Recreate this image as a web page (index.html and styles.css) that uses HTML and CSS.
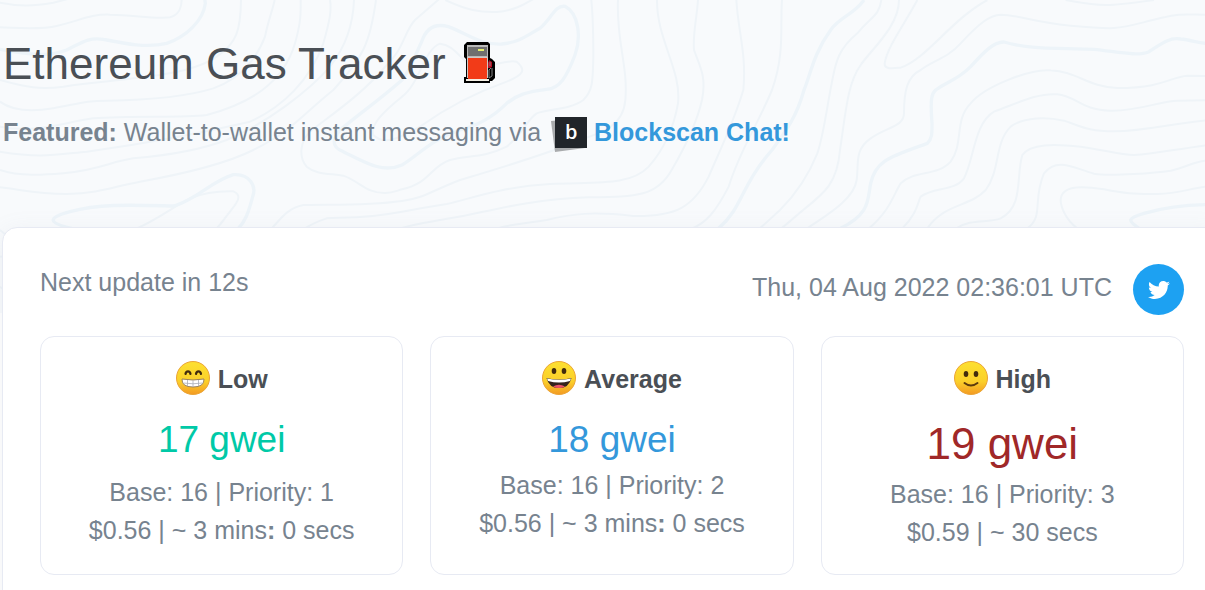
FILE: index.html
```html
<!DOCTYPE html>
<html lang="en">
<head>
  <meta charset="UTF-8">
  <meta name="viewport" content="width=device-width,initial-scale=1.0">
  <title>Ethereum Gas Tracker</title>
  <link rel="stylesheet" href="styles.css">
</head>
<body>
  <!-- contour lines behind the header -->
  <svg class="contours" viewBox="0 0 3615 940" preserveAspectRatio="xMinYMin slice" aria-hidden="true">
    <g class="thin">
      <path d="M0 8C60 20 100 18 160 8L230-10"/>
      <path d="M0 82C60 84 120 90 170 78C240 62 270 42 330 44C400 44 460 58 510 52C540 44 545 20 545-5"/>
      <path d="M0 240C80 262 120 270 190 260C280 245 330 245 400 235C520 222 600 205 650 170C710 130 722 90 723 0"/>
      <path d="M0 305C40 335 100 335 160 325C240 310 260 302 320 302C440 300 560 290 640 265C740 230 780 150 795 110C805 60 818 30 824 0"/>
      <path d="M0 380C110 400 180 370 280 355C400 345 540 355 620 345C750 310 850 250 885 130C905 60 902 30 902 0"/>
      <path d="M0 455C120 475 160 465 260 455C440 430 600 400 750 365C850 320 930 240 970 130C990 60 995 30 990 0"/>
      <path d="M0 510C60 530 130 525 190 520C300 510 330 485 400 475C520 465 600 450 680 420C800 370 930 270 990 200C1045 130 1060 60 1062 0"/>
      <path d="M0 562C70 570 110 582 200 582C300 580 340 560 420 545C560 520 680 490 760 450C880 390 900 350 1000 270C1090 170 1110 130 1128 0"/>
      <path d="M410 685C470 660 520 620 570 595C620 575 660 573 700 574C730 585 710 610 690 635C670 660 665 670 650 685"/>
      <path d="M0 690L24 710M0 770L24 768M0 860L24 880"/>
      <path d="M1320-5L1245 60C1215 90 1210 150 1160 195C1090 280 1000 340 930 395C900 425 895 470 920 500C950 525 990 520 1030 527C1080 545 1100 580 1155 579C1180 578 1190 572 1206 568C1290 550 1290 500 1350 480C1400 465 1450 475 1520 440C1570 400 1580 360 1610 340C1650 325 1710 330 1750 300C1780 270 1778 240 1780 170C1780 90 1780 60 1774 0"/>
      <path d="M1206 290C1260 250 1270 150 1320 131C1370 135 1390 200 1440 205C1490 190 1530 180 1550 185C1580 210 1570 225 1520 245C1420 280 1330 330 1260 380C1190 420 1150 435 1120 405C1110 375 1150 335 1206 290Z"/>
      <path d="M1336 0C1400 30 1440 38 1490 36C1540 32 1570 15 1600-3"/>
      <path d="M1854 0C1848 120 1885 200 1876 300C1870 380 1800 400 1740 420C1650 460 1480 510 1380 540C1290 575 1270 595 1206 603C1100 618 1000 613 910 615C860 625 840 660 815 685"/>
      <path d="M1971 0C1970 120 2045 210 2034 310C2020 390 1990 450 1946 500C1890 560 1780 545 1650 552C1500 560 1400 600 1340 612C1290 620 1260 625 1206 635C1100 655 1040 652 980 655C950 665 930 675 915 685"/>
      <path d="M2094 0C2090 60 2078 100 2082 150C2100 200 2120 230 2106 300C2090 370 2050 450 2015 510C1970 590 1910 590 1766 592C1560 600 1450 640 1350 655C1300 665 1250 670 1206 684"/>
      <path d="M2209 0C2215 100 2240 160 2230 270C2200 370 2160 450 2126 530C2080 620 2030 650 1900 648C1780 635 1720 640 1640 660C1570 672 1530 672 1490 686"/>
      <path d="M2346 0C2340 80 2355 160 2316 270C2270 380 2220 450 2186 560C2150 630 2120 670 2070 688"/>
      <path d="M2644 0C2637 50 2612 50 2572 100C2512 150 2507 190 2497 240C2477 340 2472 400 2452 460C2420 540 2380 590 2340 630L2280 685"/>
      <path d="M2697 0C2697 80 2612 150 2582 195C2542 250 2537 340 2520 450C2512 550 2472 580 2412 628L2345 685"/>
      <path d="M2752 0C2712 75 2662 140 2654 190C2652 210 2682 205 2702 203C2782 175 2852 60 2962 0"/>
    </g>
    <g class="thin" transform="translate(2412 0)">
      <path d="M10 685C60 650 150 600 158 540C165 490 150 450 200 415C250 380 300 380 300 340C300 270 310 230 350 210C390 180 430 175 470 130C530 65 560 45 590 44C640 44 680 65 800 77C960 92 940 85 1080 52C1120 40 1150 44 1205 44"/>
      <path d="M785 0C900 22 920 18 1050 0"/>
      <path d="M195 685C260 630 270 580 290 550C330 510 400 530 440 485C480 430 450 360 500 310C540 260 680 205 740 211C820 215 850 260 940 264C1080 264 1100 230 1150 227L1205 228"/>
      <path d="M295 685C340 640 340 610 350 590C390 560 450 575 480 535C510 480 510 370 570 335C640 310 700 278 760 283C820 290 830 330 920 332C1010 333 1070 302 1120 302L1205 301"/>
      <path d="M370 685C420 610 500 620 545 570C590 510 570 430 620 380C660 350 730 350 780 362C830 378 850 394 930 394C1030 392 1090 372 1205 361"/>
      <path d="M457 685C500 655 550 670 590 655C660 620 635 530 655 465C680 430 750 432 830 440C900 450 950 465 990 465C1050 462 1100 450 1205 436"/>
      <path d="M670 685C720 650 685 600 720 520C760 470 810 505 870 521C920 530 1060 518 1100 512C1150 500 1170 485 1205 482"/>
      <path d="M820 685C785 660 770 620 770 600C772 550 850 560 900 568C960 580 990 583 1060 582C1120 580 1150 568 1205 560"/>
    </g>
    <g class="thick">
      <path d="M0 148C90 165 150 170 200 150C250 125 265 112 310 118C370 130 440 145 500 130C560 110 610 60 616 10L614-5"/>
      <path d="M215 685C150 670 135 655 210 635C300 610 400 615 520 618C580 605 640 540 700 524C750 520 770 560 758 590C745 640 735 665 715 685"/>
      <path d="M1206 240C1235 205 1245 165 1265 125C1280 80 1310 70 1345 80C1400 100 1440 135 1505 132C1560 128 1590 100 1620 85C1655 55 1665 15 1695 19C1735 40 1745 110 1725 165C1700 230 1680 265 1640 268C1580 275 1550 285 1520 310C1490 340 1440 375 1380 390C1290 420 1250 470 1206 495C1150 520 1100 490 1030 455C990 440 1000 415 1020 390C1080 340 1150 290 1206 240"/>
      <path d="M2592 0C2560 45 2520 50 2492 90C2440 160 2430 230 2412 270C2390 350 2360 390 2316 450C2220 560 2230 620 2156 685"/>
      <path d="M2522 685C2612 640 2602 600 2612 550C2627 480 2672 470 2782 430C2797 415 2796 400 2796 370C2790 290 2796 280 2807 270C2842 245 2872 240 2912 200C2952 155 2982 125 3012 126C3052 138 3092 145 3172 145L3282 148C3352 155 3412 170 3447 155C3492 125 3512 112 3542 117C3572 120 3592 128 3617 130"/>
      <path d="M3417 685C3382 660 3382 655 3432 640C3502 620 3552 615 3617 614"/>
    </g>
  </svg>

  <div class="container">
    <header class="page-header">
      <h1>Ethereum Gas Tracker
        <svg class="pump" viewBox="0 0 31 41" role="img" aria-label="Fuel pump">
          <path d="M3 0H24L26 2V16L28 17L31 20V36L28 39H26V41H0V35H2V17L0 15V3Z" fill="#000"/>
          <path d="M3 3H24V16H3Z" fill="#b9b9b9"/>
          <path d="M4 5H23V14H4Z" fill="#6f6f6f"/>
          <path d="M14 7H20V9H14Z" fill="#e5f06a"/>
          <path d="M3 15H24V36H3Z" fill="#cfc8c4"/>
          <path d="M4 16H23V37H4Z" fill="#f23b18"/>
          <path d="M2 37H25V39H2Z" fill="#f4efe4"/>
          <path d="M25 18L28 20V25L26 26H24V21Z" fill="#b80f24"/>
          <path d="M26 20V24M28 26V34L25 36V28L27 26" fill="none" stroke="#858585"/>
        </svg>
      </h1>
      <p class="featured"><b>Featured:</b> Wallet-to-wallet instant messaging via
        <svg class="blockscan" viewBox="0 0 36 35" aria-hidden="true">
          <path d="M0 4L30 1L34 31L4 35Z" fill="#a9abad"/>
          <path d="M4 0H36V31H4Z" fill="#21252a"/>
          <text x="14" y="22">b</text>
        </svg>
        <a href="#">Blockscan Chat!</a></p>
    </header>

    <main class="panel">
      <div class="status">
        <div class="next-update">Next update in 12s</div>
        <div class="updated">Thu, 04 Aug 2022 02:36:01 UTC</div>
        <a class="twitter" href="#" aria-label="Share on Twitter">
          <svg viewBox="0 0 512 512" aria-hidden="true"><path fill="#fff" d="M459.37 151.716c.325 4.548.325 9.097.325 13.645 0 138.72-105.583 298.558-298.558 298.558-59.452 0-114.68-17.219-161.137-47.106 8.447.974 16.568 1.299 25.34 1.299 49.055 0 94.213-16.568 130.274-44.832-46.132-.975-84.792-31.188-98.112-72.772 6.498.974 12.995 1.624 19.818 1.624 9.421 0 18.843-1.3 27.614-3.573-48.081-9.747-84.143-51.98-84.143-102.985v-1.299c13.969 7.797 30.214 12.67 47.431 13.319-28.264-18.843-46.781-51.005-46.781-87.391 0-19.492 5.197-37.36 14.294-52.954 51.655 63.675 129.3 105.258 216.365 109.807-1.624-7.797-2.599-15.918-2.599-24.04 0-57.828 46.782-104.934 104.934-104.934 30.213 0 57.502 12.67 76.67 33.137 23.715-4.548 46.456-13.32 66.599-25.34-7.798 24.366-24.366 44.833-46.132 57.827 21.117-2.273 41.584-8.122 60.426-16.243-14.292 20.791-32.161 39.308-52.628 54.253z"/></svg>
        </a>
      </div>

      <div class="prices">
        <section class="price low">
          <h2>
            <svg class="face" viewBox="0 0 34 34" aria-hidden="true">
              <defs>
                <linearGradient id="skin" x2="0" y2="1">
                  <stop offset="0" stop-color="#fde030"/>
                  <stop offset=".6" stop-color="#fbd02a"/>
                  <stop offset="1" stop-color="#f39a22"/>
                </linearGradient>
              </defs>
              <circle cx="17" cy="17" r="16.5" fill="url(#skin)" stroke="#eba436"/>
              <path d="M9.500 13C10 9.500 14 9.500 14.500 13M20 13C20.500 9.500 24.500 9.500 25 13" fill="none" stroke="#422b0d" stroke-width="2.200" stroke-linecap="round"/>
              <path d="M6 18Q17 20 28 18Q28.500 26 17 26Q5.500 26 6 18Z" fill="#fff" stroke="#9b825a"/>
              <path d="M7 22Q17 23.500 27 22M11.500 19V25M17 19.500V26M22.500 19V25" fill="none" stroke="#a9adb5" stroke-width=".8"/>
            </svg>
            Low
          </h2>
          <div class="gwei">17 gwei</div>
          <p>Base: 16 | Priority: 1</p>
          <p>$0.56 | ~ 3 mins<b>:</b> 0 secs</p>
        </section>
        <section class="price average">
          <h2>
            <svg class="face" viewBox="0 0 34 34" aria-hidden="true">
              <circle cx="17" cy="17" r="16.5" fill="url(#skin)" stroke="#eba436"/>
              <ellipse cx="12" cy="10" rx="2.300" ry="3" fill="#422b0d"/>
              <ellipse cx="22" cy="10" rx="2.300" ry="3" fill="#422b0d"/>
              <path d="M4.500 17Q17 20 29.500 17Q27 27 17 27Q7 27 4.500 17Z" fill="#35231c"/>
              <path d="M5 17.500Q17 20 29 17.500L28 20Q17 23 6 20Z" fill="#fff"/>
              <path d="M11 25.500Q17 22 23 25.500Q17 28.500 11 25.500Z" fill="#ed5168"/>
            </svg>
            Average
          </h2>
          <div class="gwei">18 gwei</div>
          <p>Base: 16 | Priority: 2</p>
          <p>$0.56 | ~ 3 mins<b>:</b> 0 secs</p>
        </section>
        <section class="price high">
          <h2>
            <svg class="face" viewBox="0 0 34 34" aria-hidden="true">
              <circle cx="17" cy="17" r="16.5" fill="url(#skin)" stroke="#eba436"/>
              <ellipse cx="12" cy="13" rx="2.300" ry="2.900" fill="#422b0d"/>
              <ellipse cx="22" cy="13" rx="2.300" ry="2.900" fill="#422b0d"/>
              <path d="M10.500 22Q17 27 23.500 22" fill="none" stroke="#5b3a0d" stroke-width="2" stroke-linecap="round"/>
            </svg>
            High
          </h2>
          <div class="gwei">19 gwei</div>
          <p>Base: 16 | Priority: 3</p>
          <p>$0.59 | ~ 30 secs</p>
        </section>
      </div>
    </main>
  </div>
</body>
</html>
```
FILE: styles.css
```css
* {
  box-sizing: border-box;
}
body {
  margin: 0;
  overflow: hidden;
  background-color: #fff;
  font-family: "Liberation Sans", Arial, sans-serif;
  font-size: 25px;
  line-height: 38px;
  color: #77838f;
}
h1, h2, p {
  margin: 0;
}
a {
  color: #3498db;
  font-weight: bold;
  text-decoration: none;
}

/* background */
.contours {
  position: absolute;
  top: 0;
  left: 0;
  z-index: -1;
  width: 100%;
  height: 313px;
  background-color: #f8fafc;
}
.contours path {
  fill: none;
}
.thin {
  stroke: #eff4f8;
  stroke-width: 6;
}
.thick {
  stroke: #edf4f9;
  stroke-width: 10;
}

/* the panel runs on past the right edge of the window */
.container {
  margin: 0 -17px 0 2px;
}
.page-header {
  padding: 37px 1px 76px;
}
h1 {
  margin-bottom: 23px;
  font-size: 44px;
  font-weight: normal;
  line-height: 53px;
  color: #4a4f55;
}
.pump {
  width: 31px;
  height: 41px;
  margin-left: 6px;
  vertical-align: -4px;
}
.featured {
  height: 38px;
}
.blockscan {
  width: 36px;
  height: 35px;
  margin-left: 3px;
  vertical-align: -11px;
}
.blockscan text {
  fill: #fff;
  font-family: "Open Sans", sans-serif;
  font-size: 20px;
  font-weight: 600;
}

.panel {
  padding: 36px 37px;
  background-color: #fff;
  border: 1px solid #e7eaf3;
  border-radius: 15px;
  box-shadow: 0 6px 24px rgba(140, 152, 164, .125);
}
.status {
  display: flex;
  align-items: flex-start;
  margin-bottom: 21px;
  line-height: 36px;
}
.updated {
  margin-left: auto;
  padding-top: 5px;
}
.twitter {
  display: flex;
  align-items: center;
  justify-content: center;
  width: 51px;
  height: 51px;
  margin-left: 21px;
  border-radius: 50%;
  background-color: #1da1f2;
}
.twitter svg {
  width: 22px;
  height: 22px;
}

.prices {
  display: grid;
  grid-template-columns: repeat(3, 1fr);
  gap: 27px;
}
.price {
  padding: 23px;
  border: 1px solid #e7eaf3;
  border-radius: 14px;
  text-align: center;
}
.price h2 {
  display: flex;
  justify-content: center;
  gap: 8px;
  margin-bottom: 19px;
  font-size: 25px;
  line-height: 38px;
  color: #4a4f55;
}
.face {
  width: 34px;
  height: 34px;
  margin-top: 1px;
}
.gwei {
  margin-bottom: 4px;
  font-size: 37px;
  line-height: 45px;
}
.low .gwei {
  margin-bottom: 11px;
  color: #00c9a7;
}
.average .gwei {
  color: #3498db;
}
.high .gwei {
  margin-bottom: 5px;
  font-size: 44px;
  line-height: 53px;
  color: #a02828;
}
```
